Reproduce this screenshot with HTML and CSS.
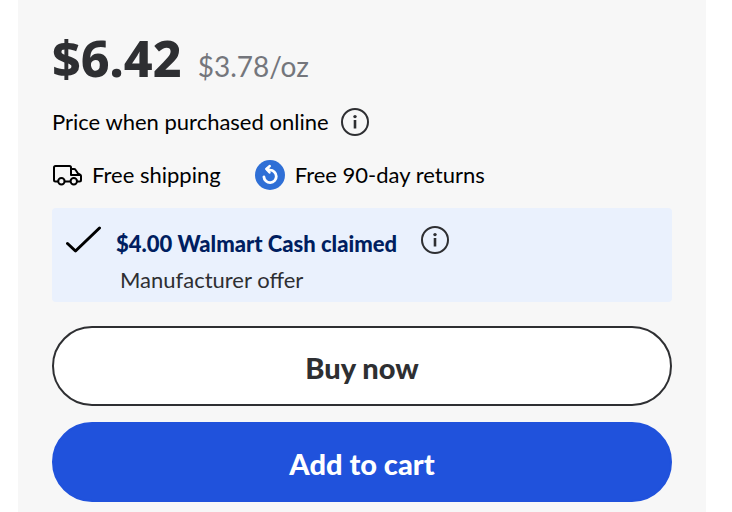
FILE: index.html
```
<!DOCTYPE html>
<html lang="en">
<head>
    <meta charset="UTF-8">
    <meta name="viewport" content="width=device-width, initial-scale=1.0">
    <title>Buy box</title>
    <link rel="stylesheet" href="styles.css">
</head>
<body>
    <main class="buy-box">
        <div class="price-row">
            <span class="price">$6.42</span>
            <span class="unit-price">$3.78/oz</span>
        </div>

        <div class="price-note">
            <span>Price when purchased online</span>
            <button class="info-btn" type="button" aria-label="Price information">
                <svg width="28" height="28" viewBox="0 0 28 28" fill="none">
                    <circle cx="14" cy="14" r="13" stroke="#2e2f32" stroke-width="2"/>
                    <circle cx="14" cy="8.6" r="1.7" fill="#2e2f32"/>
                    <path d="M14 12v8.5" stroke="#2e2f32" stroke-width="2.6"/>
                </svg>
            </button>
        </div>

        <ul class="perks">
            <li class="perk">
                <svg width="30" height="22" viewBox="0 0 30 22" fill="none" stroke="#000" stroke-width="2" stroke-linejoin="round" stroke-linecap="round">
                    <path d="M6 17.5H3.5Q2 17.5 2 16V3.500Q2 2 3.500 2H17.500Q19 2 19 3.500V11H28.500M12.800 17.500H18M19 5H22Q23 5 23.500 5.800L25.800 9.300L28.200 10.600Q29 11 29 12V16Q29 17.500 27.500 17.500H25.500"/>
                    <circle cx="9.400" cy="17.300" r="3.200"/>
                    <circle cx="21.800" cy="17.300" r="3.200"/>
                </svg>
                Free shipping
            </li>
            <li class="perk">
                <svg width="30" height="30" viewBox="0 0 30 30" fill="none">
                    <circle cx="15" cy="15" r="15" fill="#2f6fd6"/>
                    <path d="M8.900 16.800A6.200 6.200 0 1 0 15 10.200L12 9.200" stroke="#fff" stroke-width="2.800" stroke-linecap="round"/>
                    <path d="M14.800 6L11.300 9L14.500 12.500" stroke="#fff" stroke-width="2.400" stroke-linecap="round" stroke-linejoin="round"/>
                </svg>
                Free 90-day returns
            </li>
        </ul>

        <section class="offer">
            <svg width="36" height="28" viewBox="0 0 36 28" fill="none">
                <path d="M1.500 17.500L9.500 25L33.500 2" stroke="#000" stroke-width="3" stroke-linecap="round" stroke-linejoin="round"/>
            </svg>
            <div class="offer-body">
                <div class="offer-title">
                    <strong>$4.00 Walmart Cash claimed</strong>
                    <button class="info-btn" type="button" aria-label="Walmart Cash information">
                        <svg width="28" height="28" viewBox="0 0 28 28" fill="none">
                            <circle cx="14" cy="14" r="13" stroke="#2e2f32" stroke-width="2"/>
                            <circle cx="14" cy="8.6" r="1.7" fill="#2e2f32"/>
                            <path d="M14 12v8.5" stroke="#2e2f32" stroke-width="2.6"/>
                        </svg>
                    </button>
                </div>
                <p class="offer-source">Manufacturer offer</p>
            </div>
        </section>

        <div class="actions">
            <button class="btn btn-outline" type="button">Buy now</button>
            <button class="btn btn-primary" type="button">Add to cart</button>
        </div>
    </main>
</body>
</html>
```
FILE: styles.css
```
:root {
    --panel-bg: #f7f7f7;
    --offer-bg: #eaf1fd;
    --text-color: #2e2f32;
    --muted-color: #74767c;
    --primary-color: #2052dc;
    --navy-color: #001e60;
}

* {
    margin: 0;
    padding: 0;
    box-sizing: border-box;
}

body {
    font-family: Lato, sans-serif;
    font-size: 22px;
    line-height: 28px;
    color: #000;
    background-color: #fff;
}

button {
    font-family: inherit;
    cursor: pointer;
}

svg {
    display: block;
    flex-shrink: 0;
}

.buy-box {
    margin: 0 26px 0 18px;
    padding: 26px 34px 10px;
    background-color: var(--panel-bg);
}

.price-row {
    display: flex;
    align-items: baseline;
    gap: 16px;
    line-height: 64px;
}

.price {
    font-family: "Noto Sans", sans-serif;
    font-size: 50px;
    font-weight: 800;
    color: var(--text-color);
}

.unit-price {
    font-size: 28px;
    color: var(--muted-color);
}

.price-note {
    display: flex;
    align-items: center;
    gap: 12px;
    margin-top: 10px;
}

.info-btn {
    border: none;
    background: none;
}

.perks {
    display: flex;
    align-items: center;
    gap: 34px;
    margin-top: 24px;
    list-style: none;
}

.perk {
    display: flex;
    align-items: center;
    gap: 10px;
}

.offer {
    display: flex;
    gap: 14px;
    margin-top: 18px;
    padding: 18px 14px 8px;
    border-radius: 4px;
    background-color: var(--offer-bg);
}

.offer-title {
    display: flex;
    align-items: flex-start;
    gap: 24px;
    color: var(--navy-color);
}

.offer-title strong {
    padding-top: 4px;
    font-family: "Lato Black", Lato, sans-serif;
    font-weight: 900;
}

.offer-source {
    padding: 8px 4px 0;
    color: var(--text-color);
}

.actions {
    display: flex;
    flex-direction: column;
    gap: 16px;
    margin-top: 24px;
}

.btn {
    width: 100%;
    min-height: 80px;
    padding-top: 2px;
    border: 2px solid var(--primary-color);
    border-radius: 40px;
    font-family: "Lato Black", Lato, sans-serif;
    font-size: 29px;
    font-weight: 900;
}

.btn-outline {
    border-color: var(--text-color);
    background-color: #fff;
    color: var(--text-color);
}

.btn-primary {
    background-color: var(--primary-color);
    color: #fff;
}
```
